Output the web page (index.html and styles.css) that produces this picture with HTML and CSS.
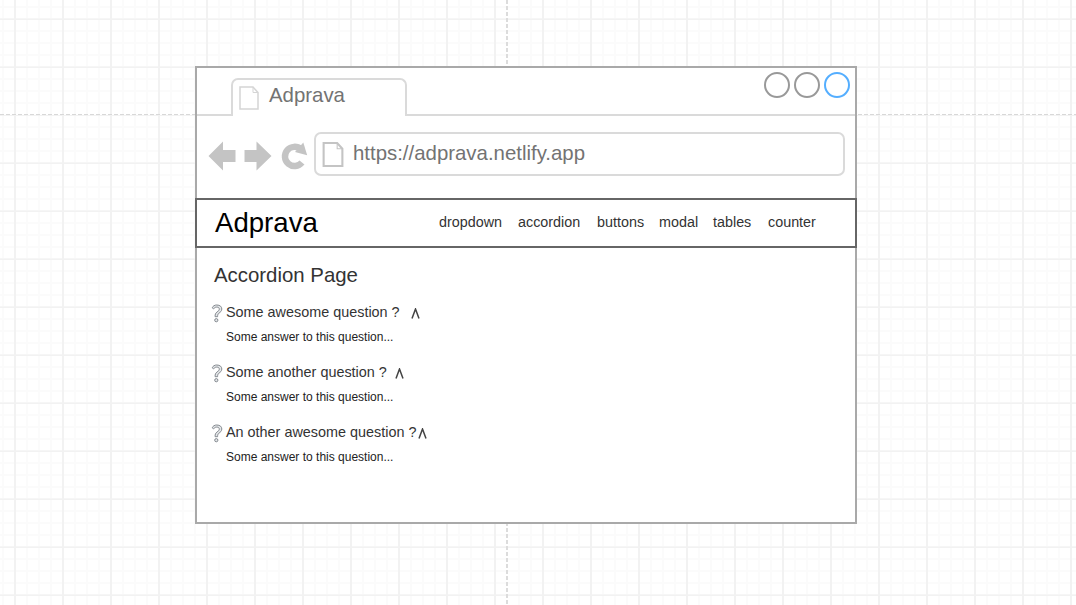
FILE: index.html
```
<!DOCTYPE html>
<html lang="en">
<head>
<meta charset="utf-8">
<title>Adprava</title>
<link rel="stylesheet" href="styles.css">
</head>
<body>
<svg class="defs" width="0" height="0">
  <symbol id="page" viewBox="0 0 20 24"><path d="M1 1H14L19 6.500V23H1Z" fill="#fff"/><path d="M14 1V6.500H19" fill="none" stroke-width="1"/></symbol>
  <symbol id="question" viewBox="0 0 12 19"><path d="M1.200 3.800C2 1.900 3.700 1 5.800 1C9 1 10.800 2.700 10.800 5C10.800 7.200 9.300 8.100 8 9.200C6.800 10.100 6.600 10.900 6.600 12.700H4.100C4 10.300 4.600 9.100 6 8C7.500 6.900 8.300 6.400 8.300 5.100C8.300 3.800 7.300 3.100 5.800 3.100C4.300 3.100 3.500 3.600 2.500 4.900Z"/><circle cx="5.300" cy="16.200" r="1.600"/></symbol>
</svg>
<main class="canvas">
  <section class="window">
    <div class="tabs">
      <div class="tab-before"></div>
      <div class="tab"><svg class="tab-icon"><use href="#page"/></svg><span>Adprava</span></div>
      <div class="controls"><i></i><i></i><i class="active"></i></div>
    </div>
    <div class="toolbar">
      <svg class="arrows" viewBox="0 0 100 32" fill="#c4c4c4">
        <path d="M0.500 16L15 1.500V10H27.500V22H15V30.500Z"/>
        <path d="M63.500 16L48.500 1.500V10H36.500V22H48.500V30.500Z"/>
        <path d="M94 22.500A9.600 9.600 0 1 1 93 9.300" fill="none" stroke="#c4c4c4" stroke-width="6.400"/>
        <path d="M87 12L95.300 2.500L99.200 15.300Z"/>
      </svg>
      <div class="address"><svg class="address-icon"><use href="#page"/></svg><span>https://adprava.netlify.app</span></div>
    </div>
    <header class="site-header">
      <div class="brand">Adprava</div>
      <nav class="nav"><span class="dropdown">dropdown</span><span class="accordion">accordion</span><span class="buttons">buttons</span><span class="modal">modal</span><span class="tables">tables</span><span>counter</span></nav>
    </header>
    <div class="content">
      <h1>Accordion Page</h1>
      <article class="item">
        <div class="question"><svg class="mark"><use href="#question"/></svg><span class="q first">Some awesome question ?</span><svg class="caret" viewBox="0 0 9 11"><path d="M1 10.500L4.500 1L8 10.500"/></svg></div>
        <p>Some answer to this question...</p>
      </article>
      <article class="item">
        <div class="question"><svg class="mark"><use href="#question"/></svg><span class="q second">Some another question ?</span><svg class="caret" viewBox="0 0 9 11"><path d="M1 10.500L4.500 1L8 10.500"/></svg></div>
        <p>Some answer to this question...</p>
      </article>
      <article class="item">
        <div class="question"><svg class="mark"><use href="#question"/></svg><span class="q third">An other awesome question ?</span><svg class="caret" viewBox="0 0 9 11"><path d="M1 10.500L4.500 1L8 10.500"/></svg></div>
        <p>Some answer to this question...</p>
      </article>
    </div>
  </section>
</main>
</body>
</html>
```
FILE: styles.css
```
* { box-sizing: border-box; }
body { margin: 0; font-family: "Liberation Sans", Arial, sans-serif; }
.defs { display: block; }
.canvas {
  width: 1076px; height: 605px; overflow: hidden;
  padding: 66px 0 0 195px;
  background-color: #fff;
  background-image:
    repeating-linear-gradient(180deg, #dcdcdc 0 4px, #fff 4px 6px),
    repeating-linear-gradient(90deg, #d8d8d8 0 4px, #fff 4px 6px),
    linear-gradient(90deg, #f2f2f2 2px, transparent 2px),
    linear-gradient(180deg, #f6f6f6 1px, #f2f2f2 1px 2px, transparent 2px),
    linear-gradient(90deg, #fbfbfb 2px, transparent 2px),
    linear-gradient(180deg, #fbfbfb 2px, transparent 2px);
  background-size: 2px 100%, 100% 1px, 48px 48px, 48px 48px, 12px 12px, 12px 12px;
  background-position: 506px 0, 0 114px, 14px 18px, 14px 18px, 2px 6px, 2px 6px;
  background-repeat: no-repeat, no-repeat, repeat, repeat, repeat, repeat;
}
.window { width: 662px; height: 458px; border: 2px solid #a9a9a9; background: #fff; }
.tabs { display: flex; height: 48px; }
.tab-before { width: 34px; border-bottom: 2px solid #dadada; }
.tab {
  display: flex; width: 176px; height: 38px; margin-top: 10px; padding: 6px 0 0 6px;
  border: 2px solid #dadada; border-bottom: 0; border-radius: 7px 7px 0 0;
  color: #737373; font-size: 20.400px; line-height: 19px;
}
.tab-icon { width: 20px; height: 24px; margin-right: 10px; stroke: #d5d5d5; stroke-width: 1.500; }
.controls { display: flex; flex: 1; justify-content: flex-end; gap: 4px; padding: 4px 5px 0 0; border-bottom: 2px solid #dadada; }
.controls i { width: 26px; height: 26px; border: 2px solid #999; border-radius: 50%; }
.controls .active { border-color: #54aeff; }
.toolbar { display: flex; height: 82px; padding: 16px 10px 0 11px; }
.arrows { width: 100px; height: 32px; margin: 8px 6px 0 0; }
.address {
  display: flex; width: 531px; height: 44px; padding: 8px 0 0 6px;
  border: 2px solid #dadada; border-radius: 7px;
  color: #737373; font-size: 20.400px; line-height: 22px;
}
.address-icon { width: 22px; height: 25px; margin-right: 9px; stroke: #c4c4c4; stroke-width: 2; }
.site-header { display: flex; height: 50px; margin: 0 -2px; padding-left: 18px; border: 2px solid #666; line-height: 46px; }
.brand { width: 224px; color: #000; font-size: 27.600px; }
.nav { display: flex; color: #333; font-size: 14.350px; line-height: 45px; }
.dropdown { width: 79px; }
.accordion { width: 79px; }
.buttons { width: 62px; }
.modal { width: 54px; }
.tables { width: 55px; }
.content { padding: 15px 0 0 15px; color: #333; }
h1 { margin: 0 0 13px 2px; font-size: 20.400px; line-height: 24px; font-weight: 400; }
.item { height: 60px; }
.question { display: flex; height: 24px; font-size: 14.400px; line-height: 24px; }
.mark { width: 12px; height: 19px; margin: 4px 3px 0 -1px; fill: #e3e6e8; stroke: #858a90; stroke-width: 1; }
.caret { width: 9px; height: 11px; margin-top: 8px; fill: none; stroke: #444; stroke-width: 1.500; }
.first { width: 185px; }
.second { width: 169px; }
.third { width: 192px; }
.item p { margin: 2px 0 0 14px; color: #222; font-size: 12px; line-height: 22px; }
```
